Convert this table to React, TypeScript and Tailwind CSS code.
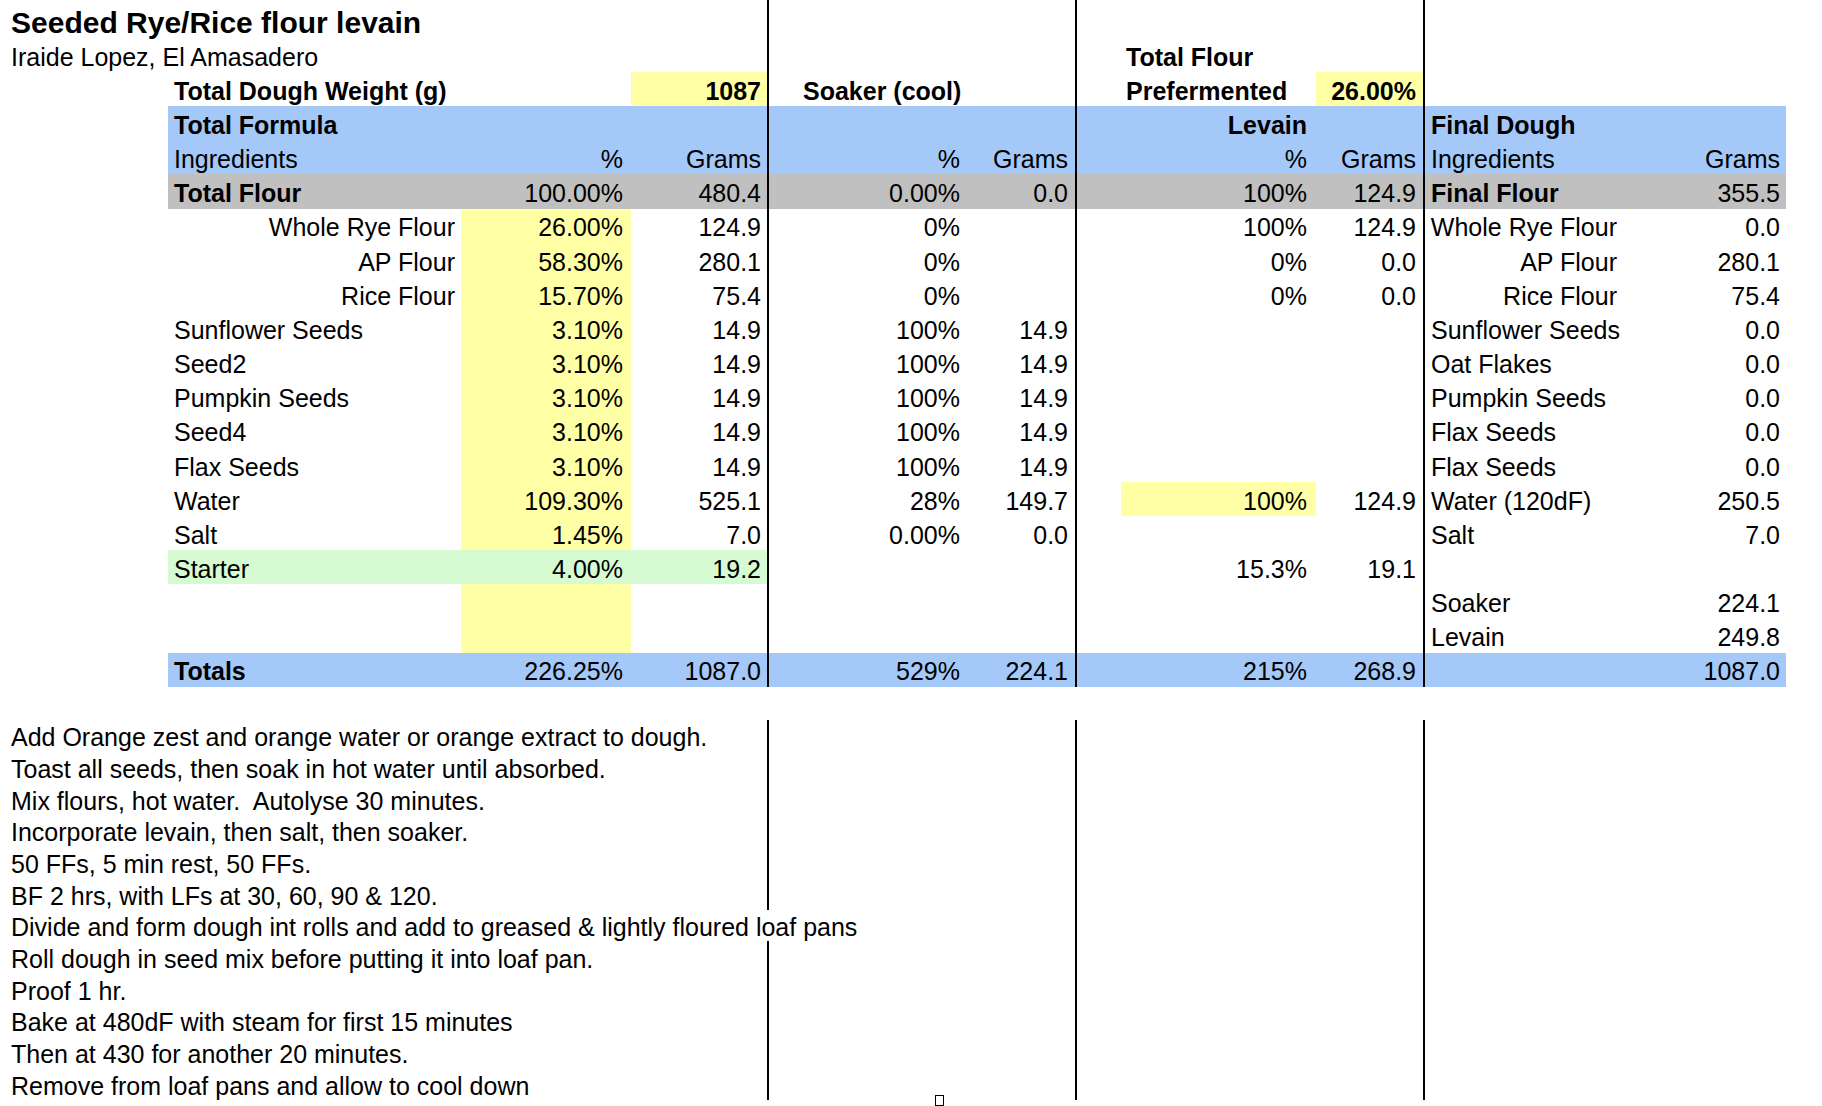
import React from 'react';

type Bg = 'y' | 'b' | 'g' | 'gr';
type C = { t?: string; r?: boolean; b?: boolean; bg?: Bg };
type Row = { cells: Record<number, C>; fill?: Bg };

// column widths, vertical rules and paddings (left edges: 0,168,461,631,769,966,1077,1121,1316,1425,1623)
const cols = [
  'w-[168px] pl-[11px]',
  'w-[293px] pl-[6px] pr-[6px]',
  'w-[170px] pr-[8px]',
  'w-[138px] pr-[6px] border-r-2 border-black',
  'w-[197px] pl-[34px] pr-[6px]',
  'w-[111px] pr-[7px] border-r-2 border-black',
  'w-[44px]',
  'w-[195px] pl-[5px] pr-[9px]',
  'w-[109px] pr-[7px] border-r-2 border-black',
  'w-[198px] pl-[6px] pr-[6px]',
  'w-[163px] pr-[6px]',
];

const bgs: Record<Bg, string> = {
  y: 'bg-[#ffffa6]',
  b: 'bg-[#a4c8f8]',
  g: 'bg-[#d6fbd2]',
  gr: 'bg-[#c0c0c0]',
};

const Y = (t?: string): C => ({ t, r: true, bg: 'y' });
const R = (t: string): C => ({ t, r: true });

const tableRows: Row[] = [
  {
    cells: {
      1: { t: 'Total Dough Weight (g)', b: true },
      3: { t: '1087', r: true, b: true, bg: 'y' },
      4: { t: 'Soaker (cool)', b: true },
      7: { t: 'Prefermented', b: true },
      8: { t: '26.00%', r: true, b: true, bg: 'y' },
    },
  },
  {
    fill: 'b',
    cells: {
      1: { t: 'Total Formula', b: true },
      7: { t: 'Levain', r: true, b: true },
      9: { t: 'Final Dough', b: true },
    },
  },
  {
    fill: 'b',
    cells: {
      1: { t: 'Ingredients' },
      2: R('%'),
      3: R('Grams'),
      4: R('%'),
      5: R('Grams'),
      7: R('%'),
      8: R('Grams'),
      9: { t: 'Ingredients' },
      10: R('Grams'),
    },
  },
  {
    fill: 'gr',
    cells: {
      1: { t: 'Total Flour', b: true },
      2: R('100.00%'),
      3: R('480.4'),
      4: R('0.00%'),
      5: R('0.0'),
      7: R('100%'),
      8: R('124.9'),
      9: { t: 'Final Flour', b: true },
      10: R('355.5'),
    },
  },
  {
    cells: {
      1: R('Whole Rye Flour'),
      2: Y('26.00%'),
      3: R('124.9'),
      4: R('0%'),
      7: R('100%'),
      8: R('124.9'),
      9: R('Whole Rye Flour'),
      10: R('0.0'),
    },
  },
  {
    cells: {
      1: R('AP Flour'),
      2: Y('58.30%'),
      3: R('280.1'),
      4: R('0%'),
      7: R('0%'),
      8: R('0.0'),
      9: R('AP Flour'),
      10: R('280.1'),
    },
  },
  {
    cells: {
      1: R('Rice Flour'),
      2: Y('15.70%'),
      3: R('75.4'),
      4: R('0%'),
      7: R('0%'),
      8: R('0.0'),
      9: R('Rice Flour'),
      10: R('75.4'),
    },
  },
  ...[
    ['Sunflower Seeds', 'Sunflower Seeds'],
    ['Seed2', 'Oat Flakes'],
    ['Pumpkin Seeds', 'Pumpkin Seeds'],
    ['Seed4', 'Flax Seeds'],
    ['Flax Seeds', 'Flax Seeds'],
  ].map(([name, final]) => ({
    cells: {
      1: { t: name },
      2: Y('3.10%'),
      3: R('14.9'),
      4: R('100%'),
      5: R('14.9'),
      9: { t: final },
      10: R('0.0'),
    },
  })),
  {
    cells: {
      1: { t: 'Water' },
      2: Y('109.30%'),
      3: R('525.1'),
      4: R('28%'),
      5: R('149.7'),
      7: Y('100%'),
      8: R('124.9'),
      9: { t: 'Water (120dF)' },
      10: R('250.5'),
    },
  },
  {
    cells: {
      1: { t: 'Salt' },
      2: Y('1.45%'),
      3: R('7.0'),
      4: R('0.00%'),
      5: R('0.0'),
      9: { t: 'Salt' },
      10: R('7.0'),
    },
  },
  {
    cells: {
      1: { t: 'Starter', bg: 'g' },
      2: { t: '4.00%', r: true, bg: 'g' },
      3: { t: '19.2', r: true, bg: 'g' },
      7: R('15.3%'),
      8: R('19.1'),
    },
  },
  { cells: { 2: Y(), 9: { t: 'Soaker' }, 10: R('224.1') } },
  { cells: { 2: Y(), 9: { t: 'Levain' }, 10: R('249.8') } },
  {
    fill: 'b',
    cells: {
      1: { t: 'Totals', b: true },
      2: R('226.25%'),
      3: R('1087.0'),
      4: R('529%'),
      5: R('224.1'),
      7: R('215%'),
      8: R('268.9'),
      10: R('1087.0'),
    },
  },
];

const notes = [
  'Add Orange zest and orange water or orange extract to dough.',
  'Toast all seeds, then soak in hot water until absorbed.',
  'Mix flours, hot water.  Autolyse 30 minutes.',
  'Incorporate levain, then salt, then soaker.',
  '50 FFs, 5 min rest, 50 FFs.',
  'BF 2 hrs, with LFs at 30, 60, 90 & 120.',
  'Divide and form dough int rolls and add to greased & lightly floured loaf pans',
  'Roll dough in seed mix before putting it into loaf pan.',
  'Proof 1 hr.',
  'Bake at 480dF with steam for first 15 minutes',
  'Then at 430 for another 20 minutes.',
  'Remove from loaf pans and allow to cool down',
];

function SheetRow({ row, height }: { row: Row; height: string }) {
  return (
    <div className={`flex ${height}`}>
      {cols.map((cls, i) => {
        const c = row.cells[i];
        const bg = c?.bg ?? (i > 0 && row.fill ? row.fill : undefined);
        return (
          <div
            key={i}
            className={`${cls} shrink-0 flex items-center pt-[5px] whitespace-nowrap ${
              c?.r ? 'justify-end' : 'justify-start'
            } ${c?.b ? 'font-bold' : ''} ${bg ? bgs[bg] : ''}`}
          >
            {c?.t}
          </div>
        );
      })}
    </div>
  );
}

export default function App() {
  return (
    <div className="h-[1106px] w-[1822px] overflow-hidden bg-white text-black text-[25px] font-['Liberation_Sans',Arial,sans-serif]">
      {/* heading rows */}
      <div className="flex h-[38px]">
        <div className="w-[168px] pl-[11px] pt-[6px] shrink-0 flex items-center whitespace-nowrap text-[30px] font-bold">
          Seeded Rye/Rice flour levain
        </div>
        <div className="w-[293px] shrink-0" />
        <div className="w-[170px] shrink-0" />
        <div className="w-[138px] shrink-0 border-r-2 border-black" />
        <div className="w-[197px] shrink-0" />
        <div className="w-[111px] shrink-0 border-r-2 border-black" />
        <div className="w-[44px] shrink-0" />
        <div className="w-[195px] shrink-0" />
        <div className="w-[109px] shrink-0 border-r-2 border-black" />
      </div>
      <SheetRow
        height="h-[34px]"
        row={{ cells: { 0: { t: 'Iraide Lopez, El Amasadero' }, 7: { t: 'Total Flour', b: true } } }}
      />

      {tableRows.map((row, i) => (
        <SheetRow key={i} row={row} height="h-[34.17px]" />
      ))}

      <div className="h-[33px]" />

      {notes.map((line, i) => (
        <div key={i} className="flex h-[31.67px]">
          <div className="w-[168px] pl-[11px] pt-[5px] shrink-0 flex items-center whitespace-pre">{line}</div>
          <div className="w-[293px] shrink-0" />
          <div className="w-[170px] shrink-0" />
          <div className={`w-[138px] shrink-0 ${i === 6 ? '' : 'border-r-2 border-black'}`} />
          <div className="w-[197px] shrink-0 relative">
            {i === notes.length - 1 && (
              <span className="absolute left-[166px] top-[27px] w-[9px] h-[11px] border border-black" />
            )}
          </div>
          <div className="w-[111px] shrink-0 border-r-2 border-black" />
          <div className="w-[44px] shrink-0" />
          <div className="w-[195px] shrink-0" />
          <div className="w-[109px] shrink-0 border-r-2 border-black" />
        </div>
      ))}
    </div>
  );
}
